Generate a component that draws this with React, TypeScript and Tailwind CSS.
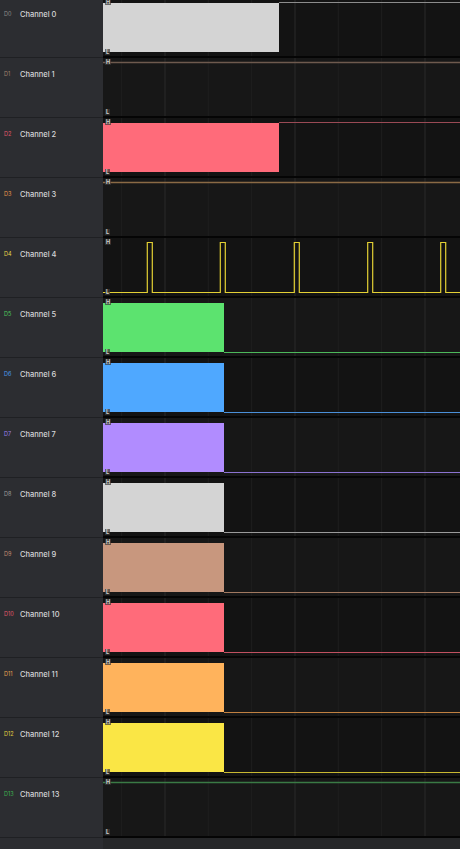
import React from 'react';

interface Channel {
  label: string;
  tag: string;
  fill?: number;
  fillColor?: string;
  level: 'H' | 'L';
  trace: string;
  pulse?: boolean;
}

const channels: Channel[] = [
  { label: 'Channel 0', tag: '#8a8a8a', fill: 176, fillColor: '#d4d4d4', level: 'H', trace: '#8c8c8c' },
  { label: 'Channel 1', tag: '#a0826d', level: 'H', trace: '#6e5a4e' },
  { label: 'Channel 2', tag: '#e0566a', fill: 176, fillColor: '#ff6b7a', level: 'H', trace: '#9a4a55' },
  { label: 'Channel 3', tag: '#e8964a', level: 'H', trace: '#8a6a45' },
  { label: 'Channel 4', tag: '#e8d44a', level: 'L', trace: '#e3d034', pulse: true },
  { label: 'Channel 5', tag: '#4cc95c', fill: 121, fillColor: '#5ce36f', level: 'L', trace: '#4cb85a' },
  { label: 'Channel 6', tag: '#4a9ae8', fill: 121, fillColor: '#4fa8ff', level: 'L', trace: '#4a8fd8' },
  { label: 'Channel 7', tag: '#9a80e8', fill: 121, fillColor: '#b18cff', level: 'L', trace: '#8a72d0' },
  { label: 'Channel 8', tag: '#9a9a9a', fill: 121, fillColor: '#d4d4d4', level: 'L', trace: '#9a9a9a' },
  { label: 'Channel 9', tag: '#c08a70', fill: 121, fillColor: '#c8977e', level: 'L', trace: '#a07860' },
  { label: 'Channel 10', tag: '#e0566a', fill: 121, fillColor: '#ff6b7a', level: 'L', trace: '#c05060' },
  { label: 'Channel 11', tag: '#e8a050', fill: 121, fillColor: '#ffb35c', level: 'L', trace: '#c08040' },
  { label: 'Channel 12', tag: '#e0d040', fill: 121, fillColor: '#fae645', level: 'L', trace: '#c8b830' },
  { label: 'Channel 13', tag: '#3cb050', level: 'H', trace: '#3a7a45' },
];

const W = 357;
const HY = 4.5;
const LY = 54.5;
const grid = [18.7, 62, 105.3, 148.7, 192, 235.3, 278.7, 322];
const pulses = [44.3, 117.3, 191.3, 264.7, 337.7];

function pulsePath() {
  let d = `M0 ${LY}`;
  pulses.forEach((x) => {
    d += ` L${x} ${LY} L${x} ${HY} L${x + 5} ${HY} L${x + 5} ${LY}`;
  });
  d += ` L${W} ${LY}`;
  return d;
}

function Wave({ ch, odd }: { ch: Channel; odd: boolean }) {
  const y = ch.level === 'H' ? HY : LY;
  return (
    <svg className="block" width={W} height={58} viewBox={`0 0 ${W} 58`}>
      <rect x={0} y={0} width={W} height={58} fill={odd ? '#171717' : '#131313'} />
      {grid.map((x, i) => (
        <line key={i} x1={x} x2={x} y1={0} y2={58} stroke={i % 3 === 1 ? '#2a2a2a' : '#1f1f1f'} strokeWidth={1} />
      ))}
      {ch.fill !== undefined && (
        <>
          <rect x={0} y={5} width={ch.fill} height={49} fill={ch.fillColor} />
          <line x1={ch.fill} x2={W} y1={y} y2={y} stroke={ch.trace} strokeWidth={1.2} />
        </>
      )}
      {ch.fill === undefined && !ch.pulse && (
        <line x1={0} x2={W} y1={y} y2={y} stroke={ch.trace} strokeWidth={1.4} />
      )}
      {ch.pulse && <path d={pulsePath()} fill="none" stroke={ch.trace} strokeWidth={1.2} />}
    </svg>
  );
}

function Row({ ch, index }: { ch: Channel; index: number }) {
  return (
    <div className="flex h-[60px] shrink-0">
      <div className="w-[103px] shrink-0 bg-[#2c2d31] border-b border-[#1f2023] pl-[4px] pt-[12px] flex items-start gap-[7px]">
        <span className="text-[5.5px] leading-[9px] w-[9px] whitespace-nowrap" style={{ color: ch.tag }}>
          D{index}
        </span>
        <span className="text-[7.5px] leading-[9px] font-medium text-[#d6d6d8]">{ch.label}</span>
      </div>
      <div className="relative flex-1 border-b-2 border-[#050505] overflow-hidden">
        <Wave ch={ch} odd={index % 2 === 1} />
        <span className="absolute left-[2px] top-[1px] px-[1px] bg-[#3a3a3a]/70 text-[5.5px] leading-[6px] font-bold text-[#d0d0d0]">H</span>
        <span className="absolute left-[2px] top-[51px] px-[1px] bg-[#3a3a3a]/70 text-[5.5px] leading-[6px] font-bold text-[#d0d0d0]">L</span>
      </div>
    </div>
  );
}

export default function App() {
  return (
    <div
      className="w-[460px] h-[849px] overflow-hidden flex flex-col bg-[#131313]"
      style={{ fontFamily: 'Inter, "Noto Sans", sans-serif' }}
    >
      <div className="flex flex-col mt-[-2px]">
        {channels.map((ch, i) => (
          <Row key={i} ch={ch} index={i} />
        ))}
      </div>
      <div className="flex flex-1">
        <div className="w-[103px] bg-[#2c2d31]" />
        <div className="flex-1 bg-[#262729]" />
      </div>
    </div>
  );
}
